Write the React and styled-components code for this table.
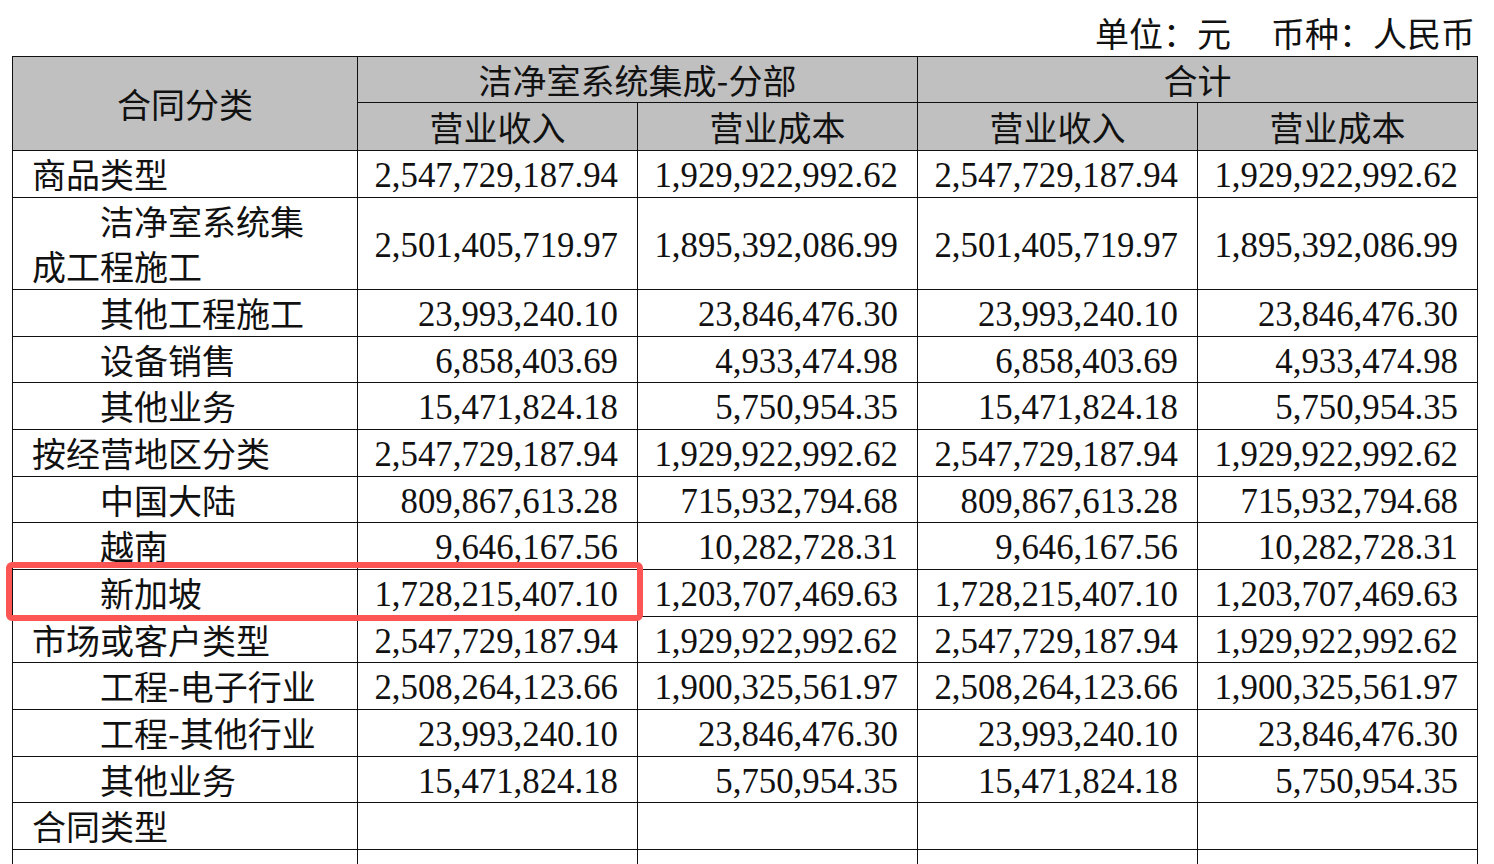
import React from 'react';
import styled, { createGlobalStyle } from 'styled-components';

const GlobalStyle = createGlobalStyle`
  html, body {
    margin: 0;
    padding: 0;
    background: #ffffff;
    overflow: hidden;
  }
  body {
    font-family: "Liberation Serif", "Noto Sans CJK SC", serif;
    color: #111;
  }
`;

const Page = styled.div`
  width: 1494px;
  height: 864px;
  padding: 0 12px 0 12px;
  box-sizing: border-box;
  overflow: hidden;
`;

const UnitLine = styled.div`
  display: flex;
  justify-content: flex-end;
  gap: 40px;
  height: 56px;
  padding-top: 13px;
  box-sizing: border-box;
  margin-right: 7px;
  font-family: "Noto Sans CJK SC", sans-serif;
  font-size: 34px;
  line-height: 40px;
`;

const TableWrap = styled.div`
  position: relative;
`;

const Table = styled.table`
  border-collapse: collapse;
  table-layout: fixed;
  width: 1465px;
  border: 1.5px solid #111;
`;

const HeadCell = styled.th`
  background: #c0c0c0;
  border: 1px solid #111;
  font-family: "Noto Sans CJK SC", sans-serif;
  font-weight: normal;
  font-size: 34px;
  line-height: ${({ $h }) => $h || 45}px;
  padding: 0;
  text-align: center;
  vertical-align: middle;
  height: ${({ $h }) => $h || 45}px;
`;

const LabelCell = styled.td`
  border: 1px solid #111;
  font-family: "Noto Sans CJK SC", sans-serif;
  font-size: 34px;
  line-height: 45.67px;
  padding: 0 24px 0 19px;
  text-indent: ${({ $child }) => ($child ? '68px' : '0')};
  vertical-align: middle;
  height: 45.67px;
  box-sizing: border-box;
`;

const NumCell = styled.td`
  border: 1px solid #111;
  font-family: "Liberation Serif", serif;
  font-size: 34.8px;
  line-height: 41.67px;
  padding: 4px 19px 0 0;
  text-align: right;
  vertical-align: middle;
  white-space: nowrap;
  box-sizing: border-box;
`;

const Highlight = styled.div`
  position: absolute;
  left: -6px;
  top: 506px;
  width: 637px;
  height: 59px;
  border: 6px solid #fd5454;
  border-radius: 6px;
  box-sizing: border-box;
  pointer-events: none;
`;

const rows = [
  { label: '商品类型', v: ['2,547,729,187.94', '1,929,922,992.62', '2,547,729,187.94', '1,929,922,992.62'] },
  { label: '洁净室系统集成工程施工', child: true, v: ['2,501,405,719.97', '1,895,392,086.99', '2,501,405,719.97', '1,895,392,086.99'] },
  { label: '其他工程施工', child: true, v: ['23,993,240.10', '23,846,476.30', '23,993,240.10', '23,846,476.30'] },
  { label: '设备销售', child: true, v: ['6,858,403.69', '4,933,474.98', '6,858,403.69', '4,933,474.98'] },
  { label: '其他业务', child: true, v: ['15,471,824.18', '5,750,954.35', '15,471,824.18', '5,750,954.35'] },
  { label: '按经营地区分类', v: ['2,547,729,187.94', '1,929,922,992.62', '2,547,729,187.94', '1,929,922,992.62'] },
  { label: '中国大陆', child: true, v: ['809,867,613.28', '715,932,794.68', '809,867,613.28', '715,932,794.68'] },
  { label: '越南', child: true, v: ['9,646,167.56', '10,282,728.31', '9,646,167.56', '10,282,728.31'] },
  { label: '新加坡', child: true, v: ['1,728,215,407.10', '1,203,707,469.63', '1,728,215,407.10', '1,203,707,469.63'] },
  { label: '市场或客户类型', v: ['2,547,729,187.94', '1,929,922,992.62', '2,547,729,187.94', '1,929,922,992.62'] },
  { label: '工程-电子行业', child: true, v: ['2,508,264,123.66', '1,900,325,561.97', '2,508,264,123.66', '1,900,325,561.97'] },
  { label: '工程-其他行业', child: true, v: ['23,993,240.10', '23,846,476.30', '23,993,240.10', '23,846,476.30'] },
  { label: '其他业务', child: true, v: ['15,471,824.18', '5,750,954.35', '15,471,824.18', '5,750,954.35'] },
  { label: '合同类型', v: ['', '', '', ''] },
  { label: '', v: ['', '', '', ''] },
];

export default function App() {
  return (
    <Page>
      <GlobalStyle />
      <UnitLine>
        <span>单位：元</span>
        <span>币种：人民币</span>
      </UnitLine>
      <TableWrap>
        <Table>
          <colgroup>
            <col style={{ width: 345 }} />
            <col style={{ width: 280 }} />
            <col style={{ width: 280 }} />
            <col style={{ width: 280 }} />
            <col style={{ width: 280 }} />
          </colgroup>
          <thead>
            <tr>
              <HeadCell rowSpan={2} $h={44}>合同分类</HeadCell>
              <HeadCell colSpan={2} $h={45}>洁净室系统集成-分部</HeadCell>
              <HeadCell colSpan={2} $h={45}>合计</HeadCell>
            </tr>
            <tr>
              <HeadCell $h={47}>营业收入</HeadCell>
              <HeadCell $h={47}>营业成本</HeadCell>
              <HeadCell $h={47}>营业收入</HeadCell>
              <HeadCell $h={47}>营业成本</HeadCell>
            </tr>
          </thead>
          <tbody>
            {rows.map((r, i) => (
              <tr key={i}>
                <LabelCell $child={r.child}>{r.label}</LabelCell>
                {r.v.map((x, j) => (
                  <NumCell key={j}>{x}</NumCell>
                ))}
              </tr>
            ))}
          </tbody>
        </Table>
        <Highlight />
      </TableWrap>
    </Page>
  );
}
